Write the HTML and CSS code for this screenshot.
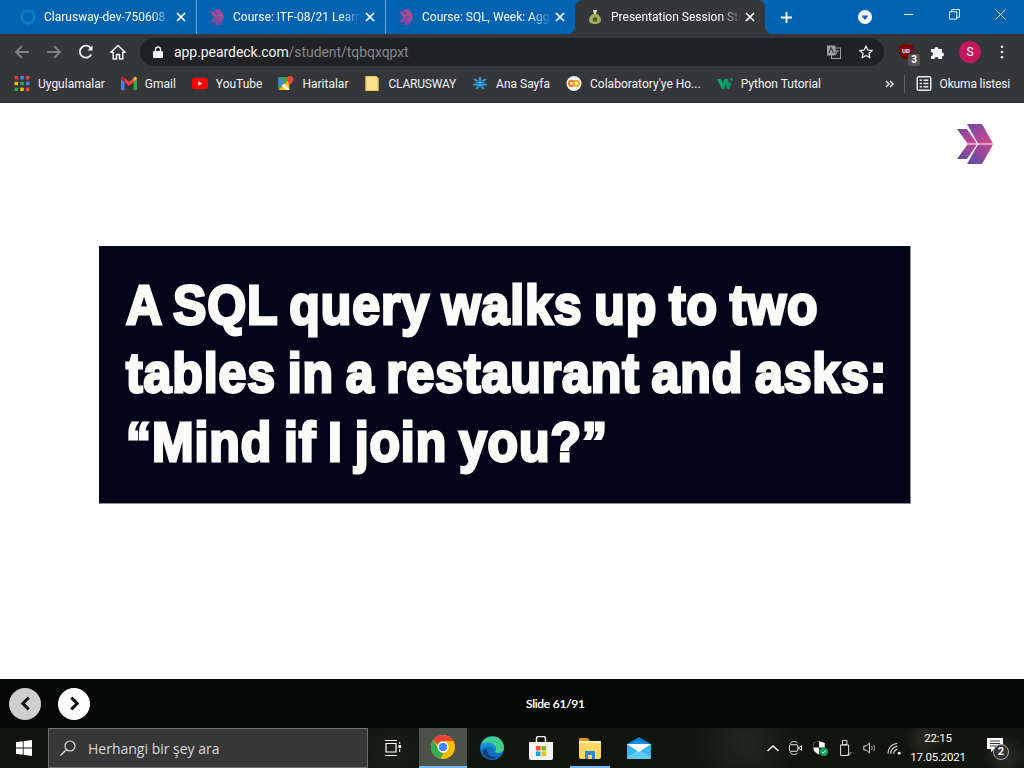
FILE: index.html
```html
<!DOCTYPE html>
<html lang="en">
<head>
<meta charset="UTF-8">
<title>Presentation Session Student</title>
<link rel="stylesheet" href="styles.css">
</head>
<body>

<div class="tabstrip">
  <div class="tab">
    <svg class="favicon" viewBox="0 0 14 14"><circle cx="7" cy="7" r="5.500" fill="none" stroke="#0a7cc4" stroke-width="2.400"/></svg>
    <span class="tab-title">Clarusway-dev-750608 -</span>
    <svg class="tab-close" viewBox="0 0 10 10"><path d="M1 1l8 8M9 1l-8 8" stroke="#fff" stroke-width="1.700"/></svg>
  </div>
  <div class="tab">
    <svg class="favicon" viewBox="0 0 36 40"><use href="#peardeck"/></svg>
    <span class="tab-title">Course: ITF-08/21 Learn</span>
    <svg class="tab-close" viewBox="0 0 10 10"><path d="M1 1l8 8M9 1l-8 8" stroke="#fff" stroke-width="1.700"/></svg>
  </div>
  <div class="tab">
    <svg class="favicon" viewBox="0 0 36 40"><use href="#peardeck"/></svg>
    <span class="tab-title">Course: SQL, Week: Agg</span>
    <svg class="tab-close" viewBox="0 0 10 10"><path d="M1 1l8 8M9 1l-8 8" stroke="#fff" stroke-width="1.700"/></svg>
  </div>
  <div class="tab tab-active">
    <svg class="favicon" viewBox="0 0 14 16"><path d="M5 1h4L8 4.500c3 1 5 4 5 6.500 0 3-3 4-6 4s-6-1-6-4c0-2.500 2-5.500 5-6.500z" fill="#a5ad5a"/><path d="M5 1h4L8 4.500H6z" fill="#d9d9c8"/><circle cx="7" cy="10.500" r="2.200" fill="#4d5a24"/></svg>
    <span class="tab-title">Presentation Session Stu</span>
    <svg class="tab-close" viewBox="0 0 10 10"><path d="M1 1l8 8M9 1l-8 8" stroke="#fff" stroke-width="1.700"/></svg>
  </div>
  <svg class="new-tab" viewBox="0 0 14 14"><path d="M7 1v12M1 7h12" stroke="#fff" stroke-width="2"/></svg>
  <div class="strip-right">
    <span class="tab-search"><svg viewBox="0 0 14 14"><circle cx="7" cy="7" r="7" fill="#fff"/><path d="M3.500 5.500h7L7 10z" fill="#0063b1"/></svg></span>
    <span class="win-btn"><svg viewBox="0 0 12 12"><path d="M1 6h10" stroke="#fff"/></svg></span>
    <span class="win-btn"><svg viewBox="0 0 12 12"><path d="M.5 3h8v8h-8zM3 3V.5h8.500V9H8.500" fill="none" stroke="#fff"/></svg></span>
    <span class="win-btn"><svg viewBox="0 0 12 12"><path d="M.5.500l11 11M11.500.500l-11 11" stroke="#fff"/></svg></span>
  </div>
</div>

<div class="toolbar">
  <svg class="tool" viewBox="0 0 16 16"><path d="M15 8H2M8 2L2 8l6 6" fill="none" stroke="#808184" stroke-width="1.800"/></svg>
  <svg class="tool" viewBox="0 0 16 16"><path d="M1 8h13M8 2l6 6-6 6" fill="none" stroke="#808184" stroke-width="1.800"/></svg>
  <svg class="tool" viewBox="0 0 16 16"><path d="M13.200 10.500A6 6 0 1 1 13 4.500" fill="none" stroke="#f1f3f4" stroke-width="1.800"/><path d="M14.500 1.500v5h-5z" fill="#f1f3f4"/></svg>
  <svg class="tool" viewBox="0 0 16 16"><path d="M8 1.500L.8 8.200h2.400V15h3.300v-4.500h3V15h3.300V8.200h2.400z" fill="none" stroke="#f1f3f4" stroke-width="1.500" stroke-linejoin="round"/></svg>
  <div class="omnibox">
    <svg class="lock" viewBox="0 0 10 12"><path d="M2.500 5V3.500a2.500 2.500 0 0 1 5 0V5" fill="none" stroke="#f1f3f4" stroke-width="1.300"/><rect y="5" width="10" height="7" rx="1" fill="#f1f3f4"/></svg>
    <span class="url">app.peardeck.com<span class="url-path">/student/tqbqxqpxt</span></span>
    <svg class="omni-icon omni-translate" viewBox="0 0 14 14"><rect x="4.500" y="3" width="9" height="10.500" fill="none" stroke="#9aa0a6"/><rect y=".5" width="8.500" height="10" fill="#9aa0a6"/><path d="M2 8l2.200-5.500L6.500 8" fill="none" stroke="#202124"/><path d="M8 6h4M10 5v1.500c0 2-1 3-2 3.500" fill="none" stroke="#9aa0a6"/></svg>
    <svg class="omni-icon" viewBox="0 0 14 14"><path d="M7 1l1.800 4.100 4.400.4-3.300 2.900 1 4.400L7 10.500l-3.900 2.300 1-4.400L.8 5.500l4.400-.4z" fill="none" stroke="#e8eaed" stroke-width="1.300" stroke-linejoin="round"/></svg>
  </div>
  <div class="extensions">
    <div class="ublock">
      <svg viewBox="0 0 14 16"><path d="M7 0l7 2c0 6-1 11-7 14C1 13 0 8 0 2z" fill="#800000"/><text x="7" y="9" class="ublock-text">UD</text></svg>
      <span class="ublock-badge">3</span>
    </div>
    <svg class="puzzle" viewBox="0 0 16 16"><path d="M1 5h3.500a2 2 0 1 1 4 0H12v3.500a2 2 0 1 1 0 4V15H8.500a2 2 0 1 0-4 0H1v-3a2 2 0 1 0 0-4z" fill="#f1f3f4"/></svg>
    <span class="avatar">S</span>
    <svg class="dots" viewBox="0 0 4 16"><circle cx="2" cy="2" r="1.500" fill="#e8eaed"/><circle cx="2" cy="8" r="1.500" fill="#e8eaed"/><circle cx="2" cy="14" r="1.500" fill="#e8eaed"/></svg>
  </div>
</div>

<div class="bookmarks">
  <a class="mark">
    <svg viewBox="0 0 13 13">
      <path d="M0 0h3v3H0z" fill="#ea4335"/><path d="M5 0h3v3H5z" fill="#4285f4"/><path d="M10 0h3v3h-3z" fill="#ea4335"/>
      <path d="M0 5h3v3H0z" fill="#fbbc04"/><path d="M5 5h3v3H5z" fill="#34a853"/><path d="M10 5h3v3h-3z" fill="#4285f4"/>
      <path d="M0 10h3v3H0z" fill="#34a853"/><path d="M5 10h3v3H5z" fill="#fbbc04"/><path d="M10 10h3v3h-3z" fill="#ea4335"/>
    </svg>Uygulamalar</a>
  <a class="mark">
    <svg viewBox="0 0 14 12"><path d="M0 2v9a1 1 0 0 0 1 1h2V5z" fill="#4285f4"/><path d="M14 2v9a1 1 0 0 1-1 1h-2V5z" fill="#34a853"/><path d="M3 5V1L7 4.500 11 1v4L7 8z" fill="#ea4335"/><path d="M0 2c0-2 2-2.500 3-1v4z" fill="#c5221f"/><path d="M14 2c0-2-2-2.500-3-1v4z" fill="#fbbc04"/></svg>Gmail</a>
  <a class="mark">
    <svg viewBox="0 0 14 10"><rect width="14" height="10" rx="2.500" fill="#f00"/><path d="M5.500 3v4L9 5z" fill="#fff"/></svg>YouTube</a>
  <a class="mark">
    <svg viewBox="0 0 14 14"><path d="M0 1h10v12H0z" fill="#34a853"/><path d="M0 13L10 3v10z" fill="#fbbc04"/><path d="M0 1l5 5-5 5z" fill="#4285f4"/><path d="M7 13L3 9l2-2 5 5v1z" fill="#f1f3f4"/><path d="M11 0a3 3 0 0 1 3 3c0 2-3 5-3 5S8 5 8 3a3 3 0 0 1 3-3z" fill="#ea4335"/></svg>Haritalar</a>
  <a class="mark mark-caps">
    <svg viewBox="0 0 12 14"><path d="M0 0h10l2 2v12H0z" fill="#fde293"/><path d="M.5.500h9l2 2v11H.5z" fill="none" stroke="#e6c35c"/></svg>CLARUSWAY</a>
  <a class="mark">
    <svg viewBox="0 0 16 16"><circle cx="8" cy="8" r="4.500" fill="#1a73b8"/><path d="M2 3l3 3M14 3l-3 3M1 9h4M15 9h-4M4 14l2-3M12 14l-2-3M8 1v4" stroke="#3d9fdc" stroke-width="2"/><path d="M6 7h4M6 9.500h4" stroke="#7fd0f5"/></svg>Ana Sayfa</a>
  <a class="mark">
    <svg viewBox="0 0 16 16"><circle cx="8" cy="8" r="8" fill="#f1f3f4"/><circle cx="5.300" cy="8" r="2.700" fill="none" stroke="#e8710a" stroke-width="1.900"/><circle cx="10.700" cy="8" r="2.700" fill="none" stroke="#f9ab00" stroke-width="1.900"/></svg>Colaboratory'ye Ho...</a>
  <a class="mark">
    <svg viewBox="0 0 16 11"><path d="M0 1h4l2 5 1-5h3l-3 10H5z" fill="#04aa6d"/><path d="M8 1h3l1 5 1-2.500L14.500 6 12 11h-2l-1-4z" fill="#059862"/><path d="M13.500 0h2v2.500h-2z" fill="#04aa6d"/></svg>Python Tutorial</a>
  <div class="marks-end">
    <svg class="chevrons" viewBox="0 0 9 8"><path d="M1 1l3 3-3 3M5 1l3 3-3 3" fill="none" stroke="#dfe1e5" stroke-width="1.500"/></svg>
    <span class="marks-sep"></span>
    <a class="mark mark-reading">
      <svg viewBox="0 0 14 14"><rect x=".7" y=".7" width="12.600" height="12.600" rx="1.500" fill="none" stroke="#e8eaed" stroke-width="1.400"/><path d="M3 4h2M6.500 4H11M3 7h2M6.500 7H11M3 10h2M6.500 10H11" stroke="#e8eaed" stroke-width="1.400"/></svg>Okuma listesi</a>
  </div>
</div>

<svg class="defs" width="0" height="0">
  <defs>
    <linearGradient id="pd-top" x1="0" y1="0" x2="1" y2="1">
      <stop offset="0" stop-color="#6d4aa3"/><stop offset="1" stop-color="#d9478f"/>
    </linearGradient>
    <linearGradient id="pd-bottom" x1="0" y1="1" x2="1" y2="0">
      <stop offset="0" stop-color="#5a4ba6"/><stop offset="1" stop-color="#c3458f"/>
    </linearGradient>
    <g id="peardeck">
      <path d="M10 0h15l11 19.500H21z" fill="url(#pd-top)"/>
      <path d="M21 20.500h15L25 40H10z" fill="url(#pd-bottom)"/>
      <path d="M0 5h10l10 14.500H10.500z" fill="url(#pd-top)"/>
      <path d="M10.500 20.500H20L10 35H0z" fill="url(#pd-bottom)"/>
    </g>
  </defs>
</svg>

<main class="stage">
  <svg class="stage-logo" viewBox="0 0 36 40"><use href="#peardeck"/></svg>
  <div class="slide">
    <p class="slide-text">A SQL query walks up to two<br>tables in a restaurant and asks:<br>&ldquo;Mind if I join you?&rdquo;</p>
  </div>
</main>

<div class="slidebar">
  <span class="nav-btn nav-prev"><svg viewBox="0 0 10 14"><path d="M8 1.500L2.500 7 8 12.500" fill="none" stroke="#111" stroke-width="2.800"/></svg></span>
  <span class="nav-btn nav-next"><svg viewBox="0 0 10 14"><path d="M2 1.500L7.500 7 2 12.500" fill="none" stroke="#111" stroke-width="2.800"/></svg></span>
  <span class="slide-count">Slide 61/91</span>
</div>

<footer class="taskbar">
  <svg class="start" viewBox="0 0 16 16"><path d="M0 2.300l6.800-1v6.300H0zM7.600 1.200L16 0v7.600H7.600zM0 8.400h6.800v6.300l-6.800-1zM7.600 8.400H16V16l-8.400-1.200z" fill="#fff"/></svg>
  <div class="search">
    <svg viewBox="0 0 16 16"><circle cx="10" cy="6" r="5" fill="none" stroke="#ddd" stroke-width="1.200"/><path d="M6.500 9.500L.5 15.500" stroke="#ddd" stroke-width="1.200"/></svg>
    <span>Herhangi bir şey ara</span>
  </div>
  <span class="task task-view"><svg viewBox="0 0 17 16"><path d="M1 .5h12M1 15.500h12M2 3.500h10v8.500H2z" fill="none" stroke="#fff" stroke-width="1.200"/><path d="M14.500 5h2.500v3h-2.500z" fill="#fff"/><path d="M15.700 2v2M15.700 9v3" stroke="#fff"/></svg></span>
  <span class="task task-chrome">
    <svg viewBox="0 0 24 24">
      <circle cx="12" cy="12" r="12" fill="#fbbc04"/>
      <path d="M12 0a12 12 0 0 1 10.400 6H12a6 6 0 0 0-5.600 3.800L2.200 5A12 12 0 0 1 12 0z" fill="#ea4335"/>
      <path d="M2.200 5l5 8.500a5.500 5.500 0 0 0 5.300 4.500L9.500 23.700A12 12 0 0 1 2.200 5z" fill="#34a853"/>
      <circle cx="12" cy="12" r="5.500" fill="#fff"/><circle cx="12" cy="12" r="4.300" fill="#4285f4"/>
    </svg>
  </span>
  <span class="task">
    <svg viewBox="0 0 24 24"><circle cx="12" cy="12" r="12" fill="#0c72c0"/><path d="M1 9C3 2 11-1 17 1c4 2 7 6 7 11 0 3-3 5-6 5-2 0-3-1-3-2 1-1 2-3 0-5C11 6 5 6 1 9z" fill="#3fd08c"/><path d="M1 9c3-3 10-4 14 1 1 1 .5 3-.5 4.500-1-3-4-5-7-4-3 .5-5 2-6.500 4z" fill="#1a8ed8"/><path d="M7 14c0 5 5 8 11 6-5 5-13 3-15-3 0-3 2-5 4-3z" fill="#17387f"/></svg>
  </span>
  <span class="task">
    <svg viewBox="0 0 24 24"><path d="M7.500 6V2.500a2 2 0 0 1 2-2h5a2 2 0 0 1 2 2V6" fill="none" stroke="#eee" stroke-width="1.500"/><path d="M0 6h24v16a2 2 0 0 1-2 2H2a2 2 0 0 1-2-2z" fill="#f3f3f3"/><path d="M7 10h4.500v4.500H7z" fill="#f25022"/><path d="M12.500 10H17v4.500h-4.500z" fill="#7fba00"/><path d="M7 15.500h4.500V20H7z" fill="#00a4ef"/><path d="M12.500 15.500H17V20h-4.500z" fill="#ffb900"/></svg>
  </span>
  <span class="task task-open">
    <svg viewBox="0 0 24 22"><path d="M1 2a1 1 0 0 1 1-1h8l2 3H1z" fill="#d9961a"/><path d="M1 4h22v16a2 2 0 0 1-2 2H3a2 2 0 0 1-2-2z" fill="#ffd75e"/><path d="M1 4h22v2H1z" fill="#fff1b8"/><path d="M7 14h10v8h-3v-4h-4v4H7z" fill="#2f88d4"/></svg>
  </span>
  <span class="task">
    <svg viewBox="0 0 24 22"><path d="M0 7h24v13a2 2 0 0 1-2 2H2a2 2 0 0 1-2-2z" fill="#36b7f0"/><path d="M0 20l12-7 12 7v.5a1.500 1.500 0 0 1-1.500 1.500h-21A1.500 1.500 0 0 1 0 20z" fill="#62cdf7"/><path d="M0 7l12-7 12 7z" fill="#0f78c8"/><path d="M0 7h24l-12 8z" fill="#fff"/><path d="M2 7h20L12 3z" fill="#1591dc"/></svg>
  </span>
  <div class="tray">
    <svg class="tray-up" viewBox="0 0 12 7"><path d="M.5 6L6 1l5.500 5" fill="none" stroke="#fff" stroke-width="1.300"/></svg>
    <svg class="tray-icon" viewBox="0 0 14 16"><path d="M1.500 3.500C2 1.500 4 1 5.500 1s3 .5 3.500 2M1.500 12.500C2 14.500 4 15 5.500 15s3-.5 3.500-2" fill="none" stroke="#ddd"/><rect x=".5" y="4.500" width="9" height="7" rx="1" fill="none" stroke="#fff"/><path d="M10 8l3.500-2.500v5z" fill="#1b2018" stroke="#fff"/></svg>
    <span class="tray-shield">
      <svg viewBox="0 0 16 16"><path d="M6.500 0l6 2v6c0 3-3 5-6 6.500C3.500 13 .5 11 .5 8V2z" fill="#fff"/><path d="M6.500 0v7H.5V2zM6.500 7h6v1c0 3-3 5-6 6.500z" fill="#12150e"/><circle cx="11.500" cy="11.500" r="4.500" fill="#16a05d"/><path d="M9.500 11.500l1.500 1.500 2.500-3" fill="none" stroke="#fff"/></svg>
    </span>
    <svg class="tray-icon" viewBox="0 0 14 18"><path d="M3.500.5h5v5h-5zM1.500 5.500h9v12h-9z" fill="#12150e" stroke="#fff"/><path d="M9 15.500l1.500 1.500 3-3.500" fill="none" stroke="#ddd"/></svg>
    <svg class="tray-icon" viewBox="0 0 16 14"><path d="M1 4.500h3L8 1v12L4 9.500H1z" fill="none" stroke="#fff"/><path d="M10.500 4.500c1 1.500 1 3.500 0 5M13 3c1.500 2.500 1.500 5.500 0 8" fill="none" stroke="#ccc"/></svg>
    <svg class="tray-wifi" viewBox="0 0 16 14"><path d="M1 13C1 7 5 3 11 2M4 13c0-4 3-7 7-8M7 13c0-2 2-4 4-5" fill="none" stroke="#ddd" stroke-width="1.200"/><circle cx="13" cy="12.500" r="1.500" fill="#fff"/></svg>
    <div class="clock"><span>22:15</span><span>17.05.2021</span></div>
    <div class="notify">
      <svg viewBox="0 0 16 15"><path d="M0 0h16v11H7l-3 3.500V11H0z" fill="#fff"/><path d="M3 3h10M3 5.500h10M3 8h7" stroke="#333"/></svg>
      <span class="notify-badge">2</span>
    </div>
  </div>
</footer>

</body>
</html>
```

FILE: styles.css
```css
* {
  box-sizing: border-box;
}

html, body {
  margin: 0;
  padding: 0;
  height: 768px;
  overflow: hidden;
}

body {
  display: flex;
  flex-direction: column;
  font-family: Roboto, "Open Sans", sans-serif;
  background-color: #fff;
}

svg {
  display: block;
  flex: none;
}

.defs {
  position: absolute;
}

/* tab strip */
.tabstrip {
  display: flex;
  align-items: center;
  height: 34px;
  padding-left: 8px;
  background-color: #0063b1;
  color: #fff;
  flex: none;
}

.tab {
  position: relative;
  display: flex;
  align-items: center;
  width: 189px;
  height: 34px;
  padding: 0 10px 0 12px;
  font-size: 12px;
  border-right: 1px solid #6fa3cf;
  flex: none;
}

.tab:nth-child(3) {
  border-right: none;
}

.tab-active {
  width: 190px;
  background-color: #35363a;
  border-right: none;
  border-radius: 8px 8px 0 0;
}

.tab-active::before,
.tab-active::after {
  content: "";
  position: absolute;
  bottom: 0;
  width: 8px;
  height: 8px;
}

.tab-active::before {
  left: -8px;
  background: radial-gradient(circle at 0 0, #0063b1 8px, #35363a 8.5px);
}

.tab-active::after {
  right: -8px;
  background: radial-gradient(circle at 100% 0, #0063b1 8px, #35363a 8.5px);
}

.favicon {
  width: 16px;
  height: 16px;
  margin-right: 8px;
}

.tab-title {
  flex: 1;
  min-width: 0;
  white-space: nowrap;
  -webkit-mask-image: linear-gradient(to right, #000 84%, transparent 100%);
  mask-image: linear-gradient(to right, #000 84%, transparent 100%);
}

.tab-close {
  width: 10px;
  height: 10px;
  margin-left: 4px;
}

.new-tab {
  width: 13px;
  height: 13px;
  margin-left: 15px;
}

.strip-right {
  display: flex;
  align-items: center;
  margin-left: auto;
  height: 34px;
  padding-right: 1px;
}

.tab-search svg {
  width: 14px;
  height: 14px;
}

.tab-search {
  margin-right: 13px;
}

.win-btn {
  display: flex;
  align-items: center;
  justify-content: center;
  width: 46px;
  height: 28px;
  margin-bottom: 6px;
}

.win-btn svg {
  width: 11px;
  height: 11px;
}

/* toolbar */
.toolbar {
  display: flex;
  align-items: center;
  height: 33px;
  padding: 2px 0 0 14px;
  background-color: #35363a;
  flex: none;
}

.tool {
  width: 16px;
  height: 16px;
  margin-right: 16px;
}

.omnibox {
  display: flex;
  align-items: center;
  width: 744px;
  height: 28px;
  margin-left: -2px;
  padding: 0 11px 0 13px;
  border-radius: 14px;
  background-color: #202124;
}

.lock {
  width: 10px;
  height: 12px;
  margin-right: 11px;
}

.url {
  font-size: 14px;
  letter-spacing: -0.06px;
  color: #f1f3f4;
  flex: 1;
}

.url-path {
  color: #85888c;
}

.omni-icon {
  width: 14px;
  height: 14px;
}

.omni-translate {
  margin-right: 18px;
}

.extensions {
  display: flex;
  align-items: center;
  margin-left: 15px;
}

.ublock {
  position: relative;
  width: 14px;
  height: 16px;
  margin-right: 17px;
}

.ublock svg {
  width: 14px;
  height: 16px;
}

.ublock-text {
  font-size: 6px;
  font-weight: bold;
  fill: #fff;
  text-anchor: middle;
}

.ublock-badge {
  position: absolute;
  left: 9px;
  top: 10px;
  width: 12px;
  height: 12px;
  border-radius: 2px;
  background-color: #555;
  color: #fff;
  font-size: 10px;
  font-weight: bold;
  line-height: 12px;
  text-align: center;
}

.puzzle {
  width: 16px;
  height: 16px;
  margin-right: 13px;
}

.avatar {
  width: 22px;
  height: 22px;
  margin-right: 19px;
  border-radius: 50%;
  background-color: #c2185b;
  color: #fff;
  font-size: 12px;
  line-height: 22px;
  text-align: center;
}

.dots {
  width: 4px;
  height: 14px;
}

/* bookmarks */
.bookmarks {
  display: flex;
  align-items: center;
  height: 36px;
  padding: 0 0 2px 14px;
  background-color: #35363a;
  border-bottom: 1px solid #2a2b2e;
  color: #f1f3f4;
  font-size: 12px;
  flex: none;
}

.mark {
  display: flex;
  align-items: center;
  gap: 8px;
  margin-right: 16px;
  white-space: nowrap;
}

.mark svg {
  width: 16px;
  height: 15px;
}

.mark-caps {
  letter-spacing: -0.2px;
}

.marks-end {
  display: flex;
  align-items: center;
  margin-left: auto;
}

.bookmarks .chevrons {
  width: 9px;
  height: 8px;
}

.marks-sep {
  width: 1px;
  height: 18px;
  margin: 0 11px 0 10px;
  background-color: #5f6368;
}

.mark-reading {
  margin-right: 14px;
  letter-spacing: -0.15px;
}

/* slide area */
.stage {
  flex: 1;
  display: flex;
  flex-direction: column;
  padding: 21px 0 0 99px;
  background-color: #fff;
}

.stage-logo {
  width: 36px;
  height: 40px;
  margin-left: 858px;
}

.slide {
  width: 812px;
  height: 258px;
  margin-top: 82px;
  padding: 25px 0 0 27px;
  background-color: #01051a;
  border-right: 1px solid #8a8c94;
  border-bottom: 1px solid #8a8c94;
  overflow: hidden;
}

.slide-text {
  margin: 0;
  color: #fbfbf8;
  font-family: "Liberation Sans", Arial, sans-serif;
  font-size: 50px;
  font-weight: bold;
  line-height: 62.3px;
  letter-spacing: 0.9px;
  word-spacing: -3px;
  white-space: nowrap;
  -webkit-text-stroke: 2.6px #fbfbf8;
  transform: scaleY(1.1);
  transform-origin: 0 0;
  filter: blur(0.6px);
}

.slidebar {
  display: flex;
  align-items: center;
  height: 49px;
  padding-left: 9px;
  background-color: #060808;
  flex: none;
}

.nav-btn {
  display: flex;
  align-items: center;
  justify-content: center;
  width: 32px;
  height: 32px;
  margin-right: 17px;
  border-radius: 50%;
}

.nav-btn svg {
  width: 11px;
  height: 15px;
}

.nav-prev {
  background-color: #cfcfcf;
}

.nav-next {
  background-color: #fff;
}

.slide-count {
  margin-left: 419px;
  color: #fff;
  font-family: "Lato", sans-serif;
  font-size: 12px;
  letter-spacing: -0.25px;
  text-shadow: 0 0 0.6px #fff;
}

/* taskbar */
.taskbar {
  display: flex;
  align-items: center;
  height: 40px;
  background-color: #12150e;
  background-image:
    radial-gradient(circle at 925px 10px, #2c2d27 0, transparent 20px),
    radial-gradient(circle at 1005px 28px, #2b2d27 0, transparent 22px),
    radial-gradient(circle at 745px 15px, #23261c 0, transparent 50px),
    radial-gradient(circle at 390px 25px, #1b1f15 0, transparent 40px);
  color: #fff;
  flex: none;
}

.start {
  width: 16px;
  height: 16px;
  margin: 0 16px;
}

.search {
  display: flex;
  align-items: center;
  width: 320px;
  height: 40px;
  padding-left: 11px;
  background-color: #373737;
  border: 1px solid #6e6e6e;
  color: #d8d8d8;
  font-family: "Open Sans", sans-serif;
  font-size: 14px;
}

.search svg {
  width: 16px;
  height: 16px;
  margin-right: 12px;
}

.task {
  display: flex;
  align-items: center;
  justify-content: center;
  width: 48px;
  height: 40px;
  margin-left: 1px;
}

.task svg {
  width: 24px;
  height: 24px;
}

.task-view {
  margin: 0 2px 0 0;
}

.task-view svg {
  width: 17px;
  height: 16px;
}

.task-chrome {
  background-color: #4b5249;
  border-bottom: 2px solid #76b9ed;
}

.task-open {
  background: linear-gradient(#76b9ed, #76b9ed) center bottom / 40px 2px no-repeat;
}

.tray {
  display: flex;
  align-items: center;
  margin-left: auto;
  height: 40px;
}

.tray-up {
  width: 12px;
  height: 7px;
  margin-right: 10px;
}

.tray-icon {
  width: 13px;
  height: 16px;
  margin-right: 11px;
}

.tray-shield {
  margin-right: 11px;
}

.tray-shield svg {
  width: 15px;
  height: 15px;
}

.tray-wifi {
  width: 15px;
  height: 14px;
}

.clock {
  display: flex;
  flex-direction: column;
  align-items: center;
  width: 72px;
  font-size: 11.5px;
  letter-spacing: -0.25px;
  line-height: 19px;
}

.notify {
  position: relative;
  width: 24px;
  height: 24px;
  margin: 0 14px 0 12px;
}

.notify svg {
  width: 16px;
  height: 15px;
  margin: 2px 0 0 1px;
}

.notify-badge {
  position: absolute;
  left: 7px;
  top: 8px;
  width: 16px;
  height: 16px;
  border: 1px solid #aaa;
  border-radius: 50%;
  background-color: #333;
  font-size: 11px;
  font-weight: bold;
  line-height: 14px;
  text-align: center;
}
```
